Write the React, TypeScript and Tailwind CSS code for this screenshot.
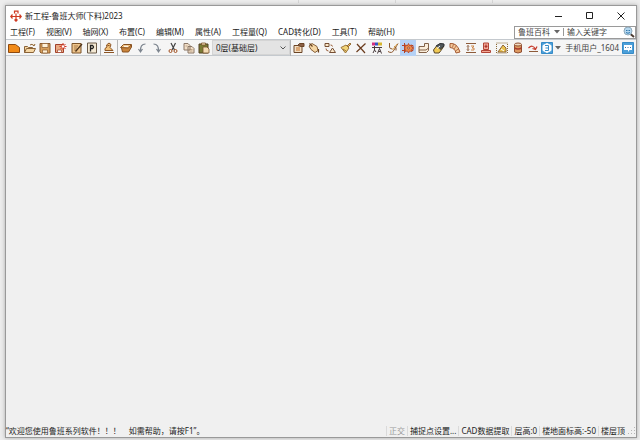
import type { ReactNode } from "react";

const B = "#6b4526";
const O = "#c2712a";
const T = "#f6d7a4";

function Icon({ children, className = "size-3" }: { children: ReactNode; className?: string }) {
  return (
    <svg viewBox="0 0 12 12" className={className} fill="none" stroke={B} strokeWidth="1" aria-hidden="true">
      {children}
    </svg>
  );
}

function Tool({ label, active, children }: { label: string; active?: boolean; children: ReactNode }) {
  return (
    <button
      type="button"
      aria-label={label}
      className={`flex h-4 min-w-0 flex-1 items-center justify-center ${active ? "bg-[#b5d1f5]" : ""}`}
    >
      <Icon>{children}</Icon>
    </button>
  );
}

const menus = ["工程(F)", "视图(V)", "轴网(X)", "布置(C)", "编辑(M)", "属性(A)", "工程量(Q)", "CAD转化(D)", "工具(T)", "帮助(H)"];

function Divider() {
  return <span className="h-4 w-px shrink-0 bg-[#b4b4b4]" />;
}

function StatusDivider() {
  return <span className="h-2.5 w-px bg-[#dadada]" />;
}

function TitleBar() {
  return (
    <header className="flex h-[19px] shrink-0 items-center bg-white pl-1">
      <svg viewBox="0 0 12 12" className="mr-[3px] size-3" fill="none" stroke="#d03a22" strokeWidth="1.2" aria-hidden="true">
        <path d="M6 3.500v7.500M1 6.500h10M4.500 3.500V1.200h3.500v2.300M2.500 4.500L.8 6.500l1.700 2M9.500 4.500l1.700 2-1.700 2M4.500 9.500L6 11.200 7.500 9.500" />
      </svg>
      <h1>新工程-鲁班大师(下料)2023</h1>
      <div className="ml-auto flex">
        <button type="button" aria-label="最小化" className="flex h-[19px] w-[31px] items-center justify-center">
          <svg viewBox="0 0 8 8" className="size-2" stroke="#222" aria-hidden="true"><path d="M0 4.500h7" /></svg>
        </button>
        <button type="button" aria-label="最大化" className="flex h-[19px] w-[31px] items-center justify-center">
          <svg viewBox="0 0 8 8" className="size-2" stroke="#222" fill="none" aria-hidden="true"><path d="M.5.5h6v6h-6z" /></svg>
        </button>
        <button type="button" aria-label="关闭" className="flex h-[19px] w-[31px] items-center justify-center">
          <svg viewBox="0 0 8 8" className="size-2" stroke="#222" aria-hidden="true"><path d="M.5.5l7 7m0-7l-7 7" /></svg>
        </button>
      </div>
    </header>
  );
}

function MenuBar() {
  return (
    <div className="flex h-[14px] shrink-0 items-center bg-white pl-1">
      <nav className="flex gap-[11px] whitespace-nowrap">
        {menus.map((m) => (
          <button key={m} type="button">{m}</button>
        ))}
      </nav>
      <form className="ml-auto flex h-[13px] w-[122px] items-center border border-[#9a9a9a] bg-white text-[#444]">
        <button type="button" className="flex items-center gap-1 whitespace-nowrap pl-[3px]">
          鲁班百科
          <svg viewBox="0 0 6 4" className="h-1 w-1.5" fill="#666" aria-hidden="true"><path d="M0 0h6L3 3.500z" /></svg>
        </button>
        <span className="mx-[3px] h-2 w-px bg-[#999]" />
        <input type="text" aria-label="搜索" placeholder="输入关键字" className="w-0 min-w-0 flex-1 bg-transparent outline-none placeholder:text-[#444]" />
        <button type="button" aria-label="查找" className="flex items-center">
          <Icon>
            <path d="M7.500 8l3.500 3" stroke="#4a3a30" strokeWidth="2" />
            <circle cx="5" cy="5" r="4" fill="#b5d7ee" stroke="#8fa9ba" />
            <path d="M3 4.500h1.500M5.500 4.500h1.500M3 6.500q2 1.500 4 0" stroke="#2f78b0" />
          </Icon>
        </button>
      </form>
    </div>
  );
}

function Toolbar() {
  return (
    <div className="flex h-[17px] shrink-0 items-center border-y border-[#c4c9ce] bg-[#f5f5f5]" role="toolbar" aria-label="工具栏">
      <div className="flex w-[94px] shrink-0">
        <Tool label="新建"><path d="M.5 2.500h7l4 3v5H.5z" fill="#f18a18" stroke="#8e4a10" /></Tool>
        <Tool label="打开"><path d="M.5 10.500v-6h3l1 1h4v1.500M.5 10.500l2-4h9l-2 4zM6 3q2-2 4 1l1-2" fill={T} stroke="#8a6338" /></Tool>
        <Tool label="保存"><path d="M1 1.500h10v9.500H2l-1-1z" fill="#d8a05c" stroke="#8a5a2c" /><path d="M3 1.500h6v4H3zM3.500 8h5v3h-5z" fill="#fff1d8" stroke="#8a5a2c" strokeWidth=".7" /></Tool>
        <Tool label="另存为"><path d="M.5 2.500h8v8h-8z" fill="#e8aa82" stroke="#a0402a" /><path d="M2.500 8h4v2.500h-4z" fill="#fff" stroke="#a0402a" strokeWidth=".7" /><path d="M8 1v7M4.500 4.500h7M5.500 2l5 5M10.500 2l-5 5" stroke="#d33a28" /><circle cx="8" cy="4.500" r="1.200" fill="#fff" stroke="none" /></Tool>
        <Tool label="工程设置"><path d="M1 1.500h9v9.500H1z" fill="#efc58c" stroke="#7a5328" /><path d="M3 4h4M3 6h3M3 8h2" stroke="#a77b46" /><path d="M4.500 9.500L11 2" stroke="#4d3218" strokeWidth="1.300" /></Tool>
        <Tool label="打印"><path d="M1.500 1h9v10h-9z" fill="#f4e9d4" stroke="#6b5b48" /><path d="M4.500 9.500V3.500h2q2 1.500 0 3h-2" stroke="#222" strokeWidth="1.300" /></Tool>
      </div>
      <Divider />
      <div className="flex w-4 shrink-0">
        <Tool label="构件库"><path d="M1 10.500h10M2 8.500h8l-3-3 1-3-2-1.500-2.500 2L4 5 2 6.500z" fill="#f1c078" stroke="#8b5425" /><path d="M4.500 3.500h2" stroke="#8b5425" /></Tool>
      </div>
      <Divider />
      <div className="flex w-[94px] shrink-0">
        <Tool label="图层"><path d="M1.500 6l1 4h6l3-5V3" fill="#c9843c" stroke="#87501f" /><path d="M.5 5.500l3-3h8l-3 3.500z" fill="#f0bd79" stroke="#87501f" /><path d="M4 4.300h4" stroke="#fff" /></Tool>
        <Tool label="撤销"><path d="M9.500 2Q4 2 4.500 9.500M2.500 7l2 3 2-3" stroke="#7d858f" strokeWidth="1.200" /></Tool>
        <Tool label="重做"><path d="M2.500 2q5.500 0 5 7.500M5.500 7l2 3 2-3" stroke="#7d858f" strokeWidth="1.200" /></Tool>
        <Tool label="剪切"><path d="M4 1l3.500 7M8.500 1L5 8" stroke="#444" strokeWidth="1.200" /><circle cx="3.500" cy="9" r="1.500" stroke="#a15122" /><circle cx="8.500" cy="9" r="1.500" stroke="#a15122" /></Tool>
        <Tool label="复制"><path d="M1 1.500h4l2 2V8H1zM5 4.500h4l2 2V11H5z" fill="#f2dfc8" stroke="#8a7767" /><path d="M2.500 4h2M6.500 7.500h3M6.500 9h3" stroke="#a98c6e" strokeWidth=".7" /></Tool>
        <Tool label="粘贴"><path d="M1 2h9v9H1z" fill="#7a7d35" stroke="#534023" /><path d="M3.500 1h4v2h-4zM5 5h4l2 2v4H5z" fill="#f5dcb5" stroke="#765028" strokeWidth=".8" /></Tool>
      </div>
      <label className="flex h-[15px] w-[78px] shrink-0 items-center border border-[#d4d4d4] bg-[#e3e3e3] pr-[3px]">
        <select aria-label="楼层" className="min-w-0 flex-1 appearance-none bg-transparent pl-[3px] outline-none">
          <option>0层(基础层)</option>
        </select>
        <svg viewBox="0 0 6 4" className="h-1 w-1.5" fill="none" stroke="#555" aria-hidden="true"><path d="M.5.5L3 3 5.500.5" /></svg>
      </label>
      <Divider />
      <div className="flex w-[250px] shrink-0">
        <Tool label="属性"><path d="M1 3.500h8v7H1z" fill="#f3dec2" /><path d="M3 6h4M3 8h4" stroke={O} /><path d="M4.500 3.500l2-2h4.500v3H8z" fill="#8a5f45" /></Tool>
        <Tool label="填充"><path d="M1 4l3-2.500 5 3 1 4-3 2-4-3z" fill={T} stroke="#86603b" /><path d="M1.500 1.500l3 3M10.500 7v3.500" stroke="#68401d" strokeWidth="1.200" /></Tool>
        <Tool label="形状替换"><path d="M1 1.500h4v3H1zM5.500 10.500l3-4.500 3 4.500z" fill="#fbe7c8" stroke="#754e33" /><path d="M2 6.500q0 2.500 2.500 2.500M6.500 3q2 0 2 1.500" stroke="#9b603a" /></Tool>
        <Tool label="格式刷"><path d="M1 5.500L6 3l3 3-3.500 5z" fill="#f2d477" stroke="#9a7339" /><path d="M7 4l3-3 1 1-3 3zM3 7l3 2" fill="#e7b46a" stroke="#9a7339" /></Tool>
        <Tool label="删除"><path d="M2 2l8 9M10.500 1.500L1.500 10" stroke="#6b3c1e" strokeWidth="1.200" /></Tool>
        <Tool label="颜色查找"><path d="M1 2h3" stroke="#d4307e" strokeWidth="3" /><path d="M4 2h3" stroke="#3558c5" strokeWidth="3" /><path d="M7 2h4" stroke="#d7b62e" strokeWidth="3" /><path d="M1 5.500h10M3.500 4v4L2 11M3.500 8L5 10M6.500 11.500l2-5 2 5M7.500 9.500h2" stroke="#473a3c" /></Tool>
        <Tool label="测量"><path d="M2.500 1v4q0 2 3 2M1 9.500q4 2.500 6-1.500l4-6.500M7 4.500q3 0 2 4" stroke="#8c572c" /><path d="M5.500 8l4.500-6" stroke="#e4b15f" /></Tool>
        <Tool label="构件显示" active><path d="M2.500 1v10M0 3.500h11v5H0" stroke="#b54125" /><path d="M6.500 1.500l1 2 2.500-.5-.5 2 2 1-2 1.500.5 2-2.500-.5-1 2-1-2-2.500.5.5-2-1-1.500 1-1-.5-2 2.500.5z" fill="#ed8a4a" stroke="#b54125" strokeWidth=".8" /><circle cx="6.500" cy="6" r="1" fill="#fbe0c0" stroke="#812f22" strokeWidth=".7" /></Tool>
        <Tool label="梁"><path d="M1 4.500h5.500v-3h4v7l-2 2H1z" fill="#faedda" stroke="#826249" /><path d="M1 8h7l2.500-2" stroke="#826249" /></Tool>
        <Tool label="板"><path d="M.5 8l3-4H11L8 8.500 6 11H1.500z" fill="#f0c955" stroke="#55452b" /><path d="M3 4q4-4 8-2v2L7 7.500" fill="#51585b" stroke="#2f3133" /><path d="M4 6.500l3-2.500" stroke="#fff" /></Tool>
        <Tool label="弧形板"><path d="M1 1.500q7-1 10 8.500l-4 1Q6 6 1 5.500z" fill="#f6c99b" stroke="#a45c35" /><path d="M4.500 2L3.500 5.500M7.500 3.500L5 7M10 6.500L6.500 9" stroke="#a45c35" strokeWidth=".8" /></Tool>
        <Tool label="标高"><path d="M1 1.500h10M1 10.500h10M3 3.500v5M2 4.500l1-1 1 1M2 7.500l1 1 1-1" stroke="#8d5b3a" /><path d="M6 4h3L7 6h2v2H6" stroke="#ce8648" /></Tool>
        <Tool label="独立基础"><path d="M3.500 1h5v6.500h-5z" fill="#f3a998" stroke="#b14436" /><path d="M1.500 8.500h9v2h-9z" fill="#f3a998" stroke="#b14436" /><path d="M6 2.500v3.500M4.500 4.300h3" stroke="#a32822" /></Tool>
        <Tool label="布置钢筋"><path d="M.5 1h11v10H.5z" stroke="#8b6935" strokeDasharray="1 1" /><path d="M2 10l5-7 3 3v4z" fill="#e9c24f" stroke="#8f6435" /><path d="M5 7l3 2" stroke="#fff" /></Tool>
        <Tool label="桶"><path d="M2.500 3v7q3.500 2 7 0V3" fill="#dd9a62" stroke="#8f4e32" /><ellipse cx="6" cy="2.500" rx="3.500" ry="1.500" fill="#f3dcc1" stroke="#8f4e32" /><path d="M2.500 6q3.500 2 7 0" stroke="#a83b2d" strokeWidth="1.500" /></Tool>
        <Tool label="旋转"><path d="M1.500 6q4-4 7 1M10 4.500L8.500 7.500 5.500 6.500" stroke="#c63c2d" strokeWidth="1.200" /><path d="M2 9.500h9" stroke="#8d5b3a" /></Tool>
      </div>
      <div className="ml-auto flex shrink-0 items-center whitespace-nowrap pr-0.5 text-[#444]">
        <button type="button" aria-label="服务" className="flex items-center gap-0.5">
          <Icon><path d="M.5.5h11v11H.5z" fill="#4b9fd9" stroke="#368bc7" /><path d="M6 1.500l4 2v5l-4 2-4-2v-5z" fill="#fff" stroke="#fff" /><path d="M4 3.500h3.500v5H4M4.500 6h3" stroke="#398dc7" /></Icon>
          <svg viewBox="0 0 6 4" className="h-1 w-1.5" fill="#666" aria-hidden="true"><path d="M0 0h6L3 3.500z" /></svg>
        </button>
        <span className="ml-1 mr-[3px]">手机用户_1604</span>
        <button type="button" aria-label="消息">
          <Icon><path d="M.5.5h11v11H.5z" fill="#4b9fd9" stroke="#368bc7" /><path d="M2 3h8v5H7.500L6 10V8H2z" fill="#fff" stroke="none" /><path d="M3 5.500h1M5.500 5.500h1M8 5.500h1" stroke="#3b75a7" /></Icon>
        </button>
      </div>
    </div>
  );
}

function StatusBar() {
  return (
    <footer className="flex h-[13px] shrink-0 items-center whitespace-nowrap bg-[#f0f0f0]">
      <p className="whitespace-pre">“欢迎您使用鲁班系列软件！！！　如需帮助，请按F1”。</p>
      <div className="ml-auto flex items-center gap-0.5">
        <StatusDivider />
        <button type="button" className="text-[#999]">正交</button>
        <StatusDivider />
        <button type="button">捕捉点设置...</button>
        <StatusDivider />
        <span>CAD数据提取</span>
        <StatusDivider />
        <span>层高:0</span>
        <StatusDivider />
        <span>楼地面标高:-50</span>
        <StatusDivider />
        <span>楼层顶</span>
        <svg viewBox="0 0 8 8" className="ml-px size-2" fill="#b5b5b5" aria-hidden="true"><path d="M6 0h1v1H6zM6 3h1v1H6zM6 6h1v1H6zM3 3h1v1H3zM3 6h1v1H3zM0 6h1v1H0z" /></svg>
      </div>
    </footer>
  );
}

export default function App() {
  return (
    <div className="flex h-screen flex-col bg-[#ededed] px-[3px] pb-0.5 pl-[5px] font-['Noto_Sans','Noto_Sans_CJK_SC',sans-serif] text-[8px] leading-[12px] text-[#1c1c1c]">
      <div className="flex h-[5px] shrink-0 justify-end gap-24 pr-36">
        <span className="h-[3px] w-px bg-[#d6d6d6]" />
        <span className="h-[3px] w-px bg-[#d6d6d6]" />
        <span className="h-[3px] w-px bg-[#d6d6d6]" />
      </div>
      <div className="flex min-h-0 flex-1 flex-col border border-[#999] shadow-[0_0_4px_#aaa]">
        <TitleBar />
        <MenuBar />
        <Toolbar />
        <main className="flex-1 bg-[#f0f0f0]" />
        <StatusBar />
      </div>
    </div>
  );
}
